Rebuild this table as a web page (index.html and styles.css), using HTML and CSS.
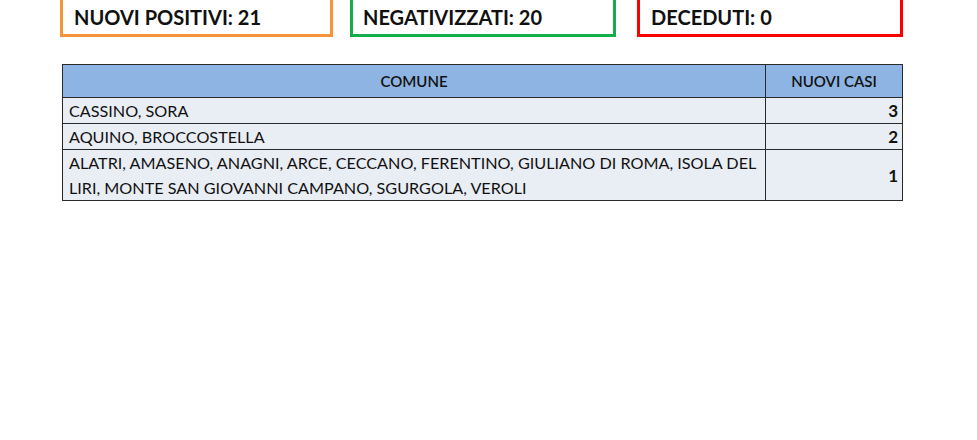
FILE: index.html
```html
<!DOCTYPE html>
<html lang="it">
<head>
<meta charset="utf-8">
<title>Bollettino</title>
<link rel="stylesheet" href="styles.css">
</head>
<body>
<div class="page">
  <div class="stats">
    <div class="stat stat-orange">NUOVI POSITIVI: 21</div>
    <div class="stat stat-green">NEGATIVIZZATI: 20</div>
    <div class="stat stat-red">DECEDUTI: 0</div>
  </div>
  <table class="cases">
    <thead>
      <tr><th class="col-comune">COMUNE</th><th class="col-casi">NUOVI CASI</th></tr>
    </thead>
    <tbody>
      <tr class="row-single"><td class="name">CASSINO, SORA</td><td class="num">3</td></tr>
      <tr class="row-single"><td class="name">AQUINO, BROCCOSTELLA</td><td class="num">2</td></tr>
      <tr class="row-double"><td class="name">ALATRI, AMASENO, ANAGNI, ARCE, CECCANO, FERENTINO, GIULIANO DI ROMA, ISOLA DEL<br>LIRI, MONTE SAN GIOVANNI CAMPANO, SGURGOLA, VEROLI</td><td class="num">1</td></tr>
    </tbody>
  </table>
</div>
</body>
</html>
```
FILE: styles.css
```css
html, body {
  margin: 0;
  padding: 0;
  background: #ffffff;
}
body {
  font-family: Lato, "Open Sans", "Liberation Sans", sans-serif;
  color: #111111;
}
.page {
  padding-left: 60px;
  width: 843px;
}
.stats {
  display: flex;
  margin-top: -3px;
}
.stat {
  box-sizing: border-box;
  height: 40px;
  border: 3px solid;
  font-weight: 700;
  font-size: 20px;
  line-height: 34px;
  padding-left: 11px;
  white-space: nowrap;
}
.stat-orange { width: 273px; border-color: #f7943a; }
.stat-green { width: 266px; margin-left: 17px; border-color: #13ad4b; padding-left: 10px; }
.stat-red { width: 266px; margin-left: 21px; border-color: #ff0000; }

.cases {
  margin-top: 27px;
  margin-left: 2px;
  width: 841px;
  table-layout: fixed;
  border-collapse: collapse;
  font-size: 16.2px;
}
.cases th, .cases td {
  border: 1px solid #2a2a2a;
  padding: 0 6px;
}
.cases th {
  background: #8db4e2;
  height: 32px;
  font-size: 15px;
  font-weight: 600;
  text-align: center;
}
.col-casi { width: 124px; }
.cases td {
  background: #e9edf4;
  text-align: left;
}
.cases td.name {
  white-space: nowrap;
  padding-right: 0;
}
.row-single td { height: 25px; }
.row-double td { height: 50px; line-height: 25px; }
.cases td.num {
  text-align: right;
  font-weight: 700;
  font-size: 17px;
  padding-right: 4px;
}
```
